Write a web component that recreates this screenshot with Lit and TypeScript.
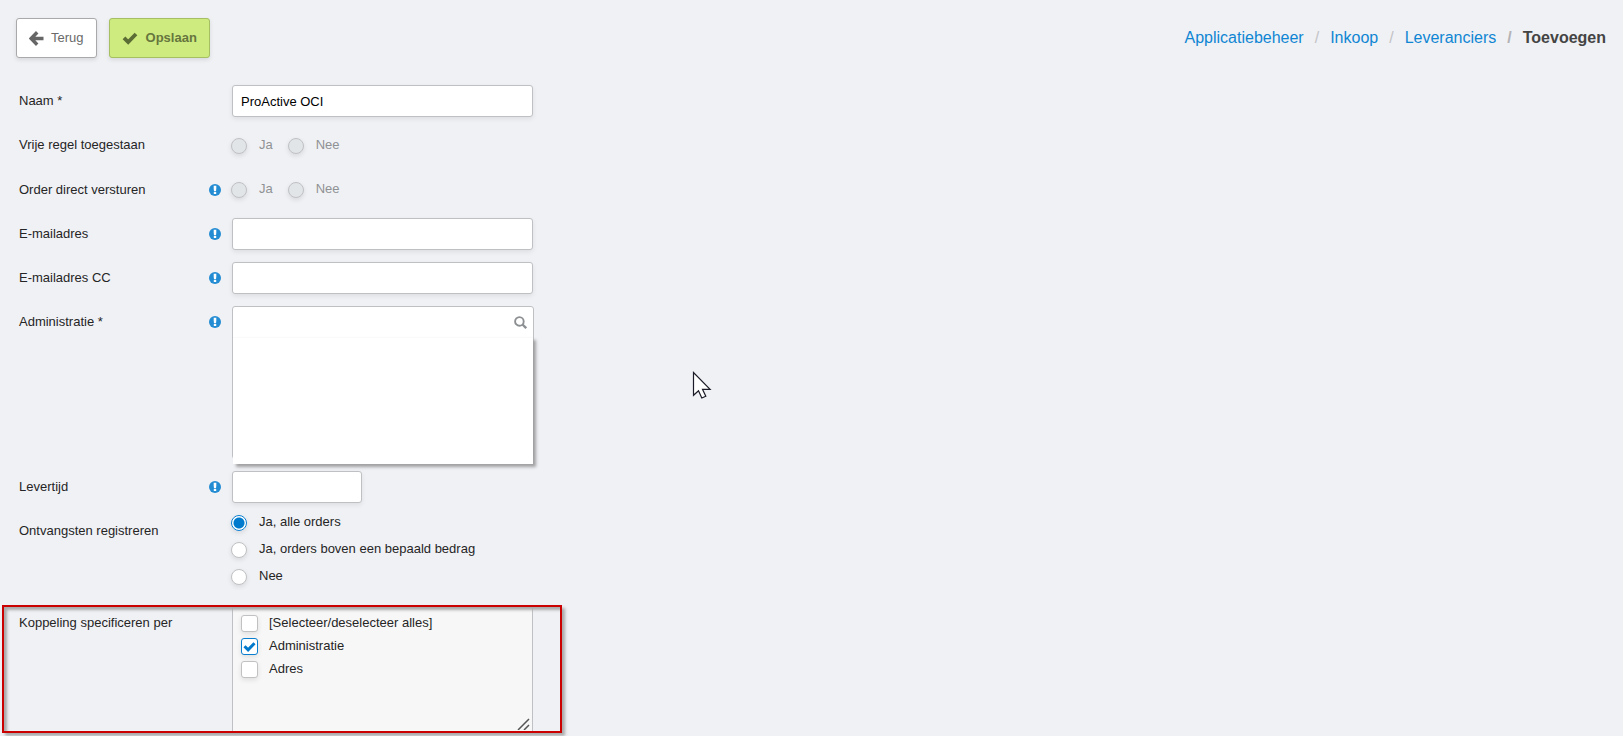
import { LitElement, html, css, nothing } from "lit";
import { customElement } from "lit/decorators.js";

@customElement("app-root")
export class AppRoot extends LitElement {
  static styles = css`
    :host {
      display: block;
      position: relative;
      box-sizing: border-box;
      min-height: 100vh;
      overflow: hidden;
      background: #f0f1f5;
      color: #252525;
      font: 13px/16px "Liberation Sans", Arial, sans-serif;
    }
    *, *::before, *::after { box-sizing: border-box; }

    header {
      display: flex;
      justify-content: space-between;
      align-items: center;
      padding: 18px 17px 0 16px;
    }
    .actions { display: flex; gap: 12px; }
    .btn {
      display: flex;
      align-items: center;
      gap: 7px;
      height: 40px;
      padding: 0 12px;
      border: 1px solid #a9a9ab;
      border-radius: 3px;
      background: #fff;
      color: #6a6a6a;
      font: inherit;
      box-shadow: 0 2px 4px rgba(0, 0, 0, 0.1);
    }
    .btn.save {
      gap: 8px;
      border-color: #a5bf62;
      background: #cdeb7f;
      color: #66763e;
      font-weight: bold;
    }
    .btn svg { display: block; }

    .crumbs {
      display: flex;
      gap: 11px;
      margin: 0;
      padding: 0;
      list-style: none;
      font-size: 16px;
      line-height: 20px;
    }
    .crumbs li { display: flex; gap: 11px; }
    .crumbs li:not(:last-child)::after { content: "/"; color: #c3c3c6; }
    .crumbs li:nth-last-child(2)::after { font-weight: bold; color: #b3b3b6; }
    .crumbs a { color: #0f86d3; text-decoration: none; }
    .crumbs b { color: #444; }

    form {
      display: grid;
      row-gap: 12px;
      padding: 27px 0 0 19px;
    }
    .row {
      display: grid;
      position: relative;
      grid-template-columns: 189px 24px minmax(0, 301px);
      align-items: start;
    }
    .name { line-height: 32px; }
    .info { display: block; margin: 10px 0 0 1px; }
    .field { grid-column: 3; min-width: 0; }

    .text {
      display: block;
      width: 100%;
      height: 32px;
      padding: 0 8px;
      border: 1px solid #bfc0c3;
      border-radius: 3px;
      background: #fff;
      color: #000;
      font: inherit;
      outline: none;
      box-shadow: 0 2px 5px rgba(0, 0, 0, 0.08);
    }
    .text.short { width: 130px; }

    .lookup {
      position: relative;
      width: 302px;
      height: 153px;
      border: 1px solid #bfc0c3;
      border-radius: 3px;
      background: #fff;
    }
    .lookup input {
      display: block;
      width: 100%;
      height: 30px;
      padding: 0 30px 0 8px;
      border: 0;
      background: none;
      font: inherit;
      outline: none;
    }
    .find {
      position: absolute;
      top: 9px;
      right: 6px;
      padding: 0;
      border: 0;
      background: none;
      line-height: 0;
    }
    .results {
      position: absolute;
      top: 30px;
      left: 0;
      right: 0;
      height: 127px;
      border-top: 1px solid #fafafa;
      background: #fff;
      box-shadow: 3px 3px 3px #a0a0a2;
    }

    input[type="radio"], input[type="checkbox"] {
      appearance: none;
      flex: none;
      margin: 0;
      border: 1px solid #c0c1c3;
      background: #fff;
      box-shadow: 0 2px 5px rgba(0, 0, 0, 0.1);
    }
    input[type="radio"] { width: 16px; height: 16px; border-radius: 50%; }
    input[type="radio"]:disabled { background: #e2e5e8; }
    input[type="radio"]:checked {
      border-color: #0a7fd0;
      background: radial-gradient(circle, #007acc 5px, #fff 6px);
    }
    .choices { display: flex; gap: 15px; height: 33px; margin-left: -1px; }
    .choices.plain { height: 32px; }
    .choices label { display: flex; align-items: center; gap: 12px; color: #8f9194; }
    .choices span, .stack span, .checks span { padding-bottom: 2px; }
    .stack { margin: -6px 0 5px -1px; }
    .stack label { display: flex; align-items: center; gap: 12px; height: 27px; }

    .checks {
      position: relative;
      height: 124px;
      padding: 4px 8px;
      border: 1px solid #bfc0c3;
      border-bottom: 0;
      background: #f7f7f7;
    }
    .checks label { display: flex; align-items: center; gap: 11px; height: 23px; }
    .checks input[type="checkbox"] { width: 17px; height: 17px; border-radius: 3px; }
    .checks input[type="checkbox"]:checked { border-color: #0a7fd0; }
    .box { display: grid; flex: none; }
    .box > * { grid-area: 1 / 1; }
    .box svg { place-self: center; pointer-events: none; }
    .grip { position: absolute; right: 2px; bottom: 1px; }

    .mark {
      position: absolute;
      top: -2px;
      left: -17px;
      width: 560px;
      height: 128px;
      border: 2px solid #cb0000;
      box-shadow: 3px 3px 3px #a9a9ab, inset 3px 3px 3px #a9a9ab;
      pointer-events: none;
    }
    .pointer { position: absolute; left: 692px; top: 371px; }
  `;

  private info() {
    return html`<svg class="info" width="12" height="12" viewBox="0 0 12 12" aria-hidden="true">
      <circle cx="6" cy="6" r="6" fill="#238cd3" />
      <path d="M4.7 1.8h2.6v3L7 7.2H5l-.3-2.4zM4.8 8h2.4v2.1H4.8z" fill="#fff" />
    </svg>`;
  }

  private textRow(id: string, name: string, info: boolean, value = "", short = false) {
    return html`<div class="row">
      <label class="name" for=${id}>${name}</label>
      ${info ? this.info() : nothing}
      <div class="field">
        <input class="text ${short ? "short" : ""}" id=${id} type="text" .value=${value} />
      </div>
    </div>`;
  }

  private yesNoRow(id: string, name: string, info: boolean) {
    return html`<div class="row" role="radiogroup" aria-labelledby=${id}>
      <span class="name" id=${id}>${name}</span>
      ${info ? this.info() : nothing}
      <div class="field choices ${info ? "plain" : ""}">
        ${["Ja", "Nee"].map(
          (t) => html`<label><input type="radio" name=${id} disabled /><span>${t}</span></label>`
        )}
      </div>
    </div>`;
  }

  private check(text: string, checked: boolean) {
    return html`<label>
      <div class="box">
        <input type="checkbox" .checked=${checked} />
        ${checked
          ? html`<svg width="13" height="11" viewBox="0 0 13 11">
              <path d="M1.5 5.2l3.6 3.6 6.4-6.6" fill="none" stroke="#0078cb" stroke-width="3" />
            </svg>`
          : nothing}
      </div>
      <span>${text}</span>
    </label>`;
  }

  render() {
    return html`
      <header>
        <div class="actions">
          <button class="btn" type="button">
            <svg width="15" height="15" viewBox="0 0 15 15">
              <path d="M8.2 1.3L2.2 7.5l6 6.2M2.5 7.5h12" fill="none" stroke="#666" stroke-width="3.4" />
            </svg>
            Terug
          </button>
          <button class="btn save" type="button">
            <svg width="16" height="14" viewBox="0 0 16 14">
              <path d="M2 6.8l4.2 4.2L14 3" fill="none" stroke="#5c6c35" stroke-width="3.8" />
            </svg>
            Opslaan
          </button>
        </div>
        <nav>
          <ol class="crumbs">
            <li><a href="#">Applicatiebeheer</a></li>
            <li><a href="#">Inkoop</a></li>
            <li><a href="#">Leveranciers</a></li>
            <li><b>Toevoegen</b></li>
          </ol>
        </nav>
      </header>

      <form>
        ${this.textRow("naam", "Naam *", false, "ProActive OCI")}
        ${this.yesNoRow("vrij", "Vrije regel toegestaan", false)}
        ${this.yesNoRow("direct", "Order direct versturen", true)}
        ${this.textRow("mail", "E-mailadres", true)}
        ${this.textRow("mailcc", "E-mailadres CC", true)}
        <div class="row">
          <label class="name" for="admin">Administratie *</label>
          ${this.info()}
          <div class="field lookup">
            <input id="admin" type="text" />
            <button class="find" type="button" aria-label="Zoeken">
              <svg width="13" height="13" viewBox="0 0 13 13" fill="none" stroke="#8d9093">
                <circle cx="5.4" cy="5.4" r="4.3" stroke-width="1.9" />
                <path d="M8.5 8.5l3.7 3.7" stroke-width="2.3" />
              </svg>
            </button>
            <div class="results"></div>
          </div>
        </div>
        ${this.textRow("lever", "Levertijd", true, "", true)}
        <div class="row" role="radiogroup" aria-labelledby="ontv">
          <span class="name" id="ontv">Ontvangsten registreren</span>
          <div class="field stack">
            ${["Ja, alle orders", "Ja, orders boven een bepaald bedrag", "Nee"].map(
              (t, i) => html`<label>
                <input type="radio" name="ontv" .checked=${i === 0} /><span>${t}</span>
              </label>`
            )}
          </div>
        </div>
        <div class="row" role="group" aria-labelledby="kop">
          <span class="name" id="kop">Koppeling specificeren per</span>
          <div class="field checks">
            ${this.check("[Selecteer/deselecteer alles]", false)}
            ${this.check("Administratie", true)}
            ${this.check("Adres", false)}
            <svg class="grip" width="13" height="12" viewBox="0 0 13 12">
              <path d="M1 12L12 1M7 12l5-5" stroke="#555" stroke-width="1.5" />
            </svg>
          </div>
          <div class="mark"></div>
        </div>
      </form>

      <svg class="pointer" width="20" height="29" viewBox="0 0 20 29">
        <path d="M1.5 1.5v22.8l5-4.6 3.3 7.3 4-1.7-3.3-7h7.6z" fill="#fff" stroke="#1c1c28" stroke-width="1.2" />
      </svg>
    `;
  }
}
